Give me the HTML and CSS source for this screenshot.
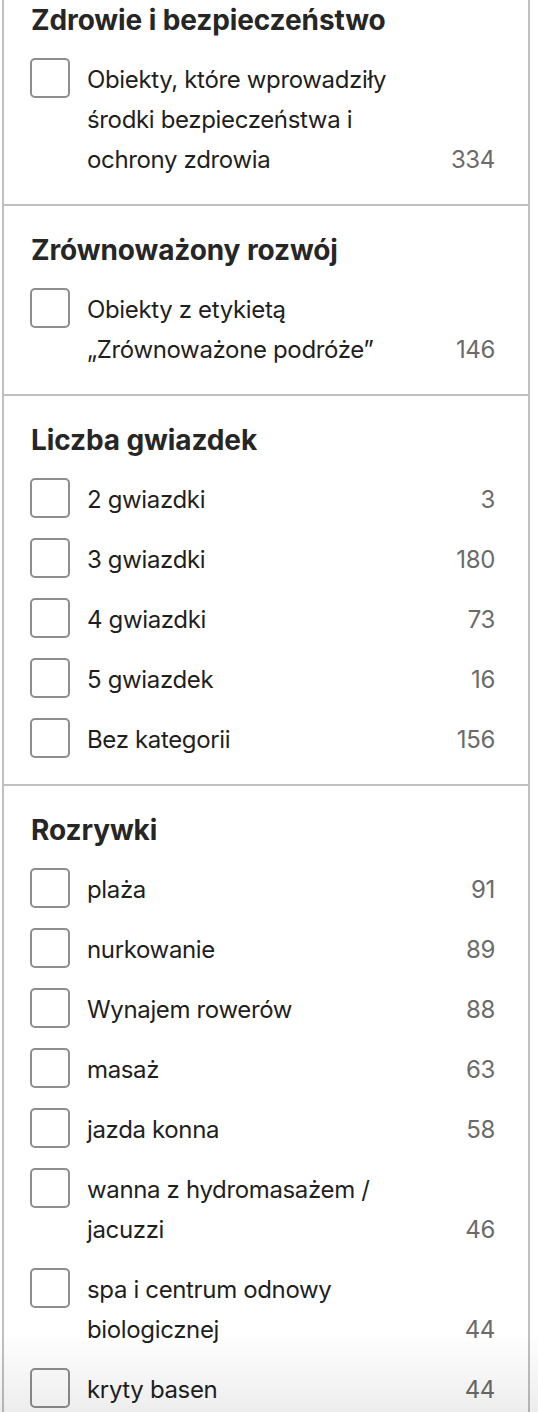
FILE: index.html
```html
<!DOCTYPE html>
<html lang="pl">
<head>
<meta charset="utf-8">
<title>Filtry</title>
<link rel="stylesheet" href="styles.css">
</head>
<body>
<div class="panel">
  <section class="group group--first">
    <h3 class="group-title">Zdrowie i bezpieczeństwo</h3>
    <ul class="options">
      <li class="option"><span class="box"></span><span class="label">Obiekty, które wprowadziły środki bezpieczeństwa i ochrony zdrowia</span><span class="count">334</span></li>
    </ul>
  </section>
  <section class="group">
    <h3 class="group-title">Zrównoważony rozwój</h3>
    <ul class="options">
      <li class="option"><span class="box"></span><span class="label">Obiekty z etykietą „Zrównoważone podróże”</span><span class="count">146</span></li>
    </ul>
  </section>
  <section class="group">
    <h3 class="group-title">Liczba gwiazdek</h3>
    <ul class="options">
      <li class="option"><span class="box"></span><span class="label">2 gwiazdki</span><span class="count">3</span></li>
      <li class="option"><span class="box"></span><span class="label">3 gwiazdki</span><span class="count">180</span></li>
      <li class="option"><span class="box"></span><span class="label">4 gwiazdki</span><span class="count">73</span></li>
      <li class="option"><span class="box"></span><span class="label">5 gwiazdek</span><span class="count">16</span></li>
      <li class="option"><span class="box"></span><span class="label">Bez kategorii</span><span class="count">156</span></li>
    </ul>
  </section>
  <section class="group">
    <h3 class="group-title">Rozrywki</h3>
    <ul class="options">
      <li class="option"><span class="box"></span><span class="label">plaża</span><span class="count">91</span></li>
      <li class="option"><span class="box"></span><span class="label">nurkowanie</span><span class="count">89</span></li>
      <li class="option"><span class="box"></span><span class="label">Wynajem rowerów</span><span class="count">88</span></li>
      <li class="option"><span class="box"></span><span class="label">masaż</span><span class="count">63</span></li>
      <li class="option"><span class="box"></span><span class="label">jazda konna</span><span class="count">58</span></li>
      <li class="option"><span class="box"></span><span class="label">wanna z hydromasażem / jacuzzi</span><span class="count">46</span></li>
      <li class="option"><span class="box"></span><span class="label">spa i centrum odnowy biologicznej</span><span class="count">44</span></li>
      <li class="option"><span class="box"></span><span class="label">kryty basen</span><span class="count">44</span></li>
    </ul>
  </section>
</div>
<div class="fade"></div>
</body>
</html>
```
FILE: styles.css
```css
html, body {
  margin: 0;
  padding: 0;
  overflow: hidden;
  background: #ffffff;
}

body {
  font-family: Inter, "Liberation Sans", Arial, sans-serif;
  color: #1f1f1f;
}

.panel {
  margin-left: 2px;
  width: 524px;
  border-left: 2px solid #c0c0c0;
  border-right: 2px solid #c0c0c0;
}

.group {
  border-top: 2px solid #c0c0c0;
  padding: 28px 33px 24px 26px;
}

.group--first {
  border-top: none;
  padding-top: 4px;
}

.group-title {
  margin: 0 0 22px 1px;
  font-size: 28px;
  line-height: 32px;
  font-weight: 700;
  letter-spacing: -0.1px;
  color: #262626;
}

.options {
  list-style: none;
  margin: 0;
  padding: 0;
  display: flex;
  flex-direction: column;
  gap: 18px;
}

.option {
  display: grid;
  grid-template-columns: 40px 1fr 64px;
  column-gap: 17px;
  padding-top: 2px;
  font-size: 24px;
  line-height: 40px;
  letter-spacing: -0.35px;
}

.box {
  box-sizing: border-box;
  width: 40px;
  height: 40px;
  margin-top: -2px;
  border: 2px solid #8e8e8e;
  border-radius: 5px;
  background: #ffffff;
}

.label {
  color: #1f1f1f;
}

.count {
  align-self: end;
  text-align: right;
  color: #6b6b6b;
}

.fade {
  position: fixed;
  left: 0;
  right: 0;
  bottom: 0;
  height: 80px;
  background: linear-gradient(to bottom, rgba(0, 0, 0, 0), rgba(0, 0, 0, 0.07));
  pointer-events: none;
}
```
